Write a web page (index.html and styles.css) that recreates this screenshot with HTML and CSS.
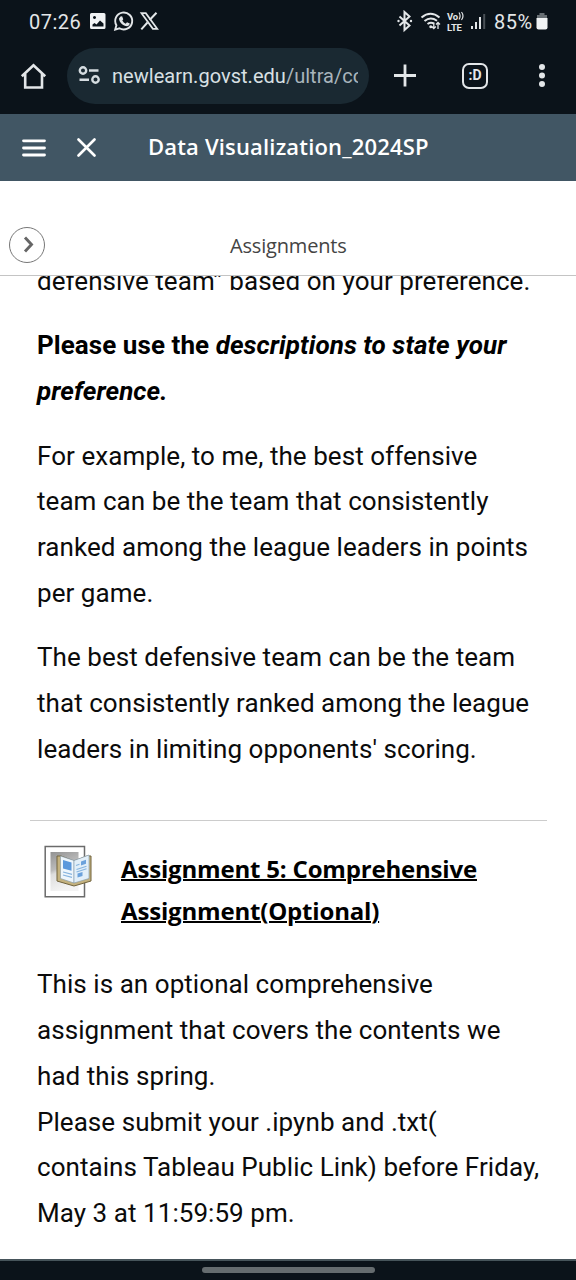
FILE: index.html
```html
<!DOCTYPE html>
<html lang="en">
<head>
<meta charset="utf-8">
<title>Data Visualization_2024SP</title>
<link rel="stylesheet" href="styles.css">
</head>
<body>
<div class="screen">
  <div class="status">
    <span class="clock">07:26</span>
    <svg class="status-left" width="70" height="24" viewBox="0 0 70 24">
      <path fill="#f1f3f4" fill-rule="evenodd" d="M2.500 3h12.500q1.500 0 1.500 1.500v13q0 1.500-1.500 1.500h-12.500q-1.500 0-1.500-1.500v-13q0-1.500 1.500-1.500zM3.500 16.500h11v-3l-3.500-3-3.500 4-2-1.500-2 1.500zM5.500 6a1.500 1.500 0 1 0 .01 0z"/>
      <path fill="none" stroke="#e3e6e8" stroke-width="1.900" d="M26.200 19.600l1.200-4.300a8.500 8.500 0 1 1 3 3z"/>
      <path fill="#e3e6e8" d="M31.500 6.500l1.600-.2 1.200 2.900-1 1.400q1.200 2.200 3.400 3.100l1.300-1.400 2.800 1.300q0 2.300-2.600 2.700c-4 0-8.200-4.300-8.200-7.700z"/>
      <path fill="none" stroke="#e3e6e8" stroke-width="1.800" d="M52.500 3.200h4.300L68.200 18.800h-4.300z"/>
      <path fill="none" stroke="#e3e6e8" stroke-width="2" d="M67.500 2.700l-6.900 7.300M58.500 12.500L52.300 19.300"/>
    </svg>
    <svg class="status-right" width="96" height="24" viewBox="0 0 96 24">
      <g fill="none" stroke="#e3e6e8" stroke-width="2">
        <path d="M3.500 6.500l10 9-5 4.500v-18l5 4.500-10 9"/>
        <path d="M25.500 7.500q9-7.500 18 0M28.500 11q6-5 12.500-.3M31.500 14q3.500-2.400 6.500-.2"/>
        <path d="M37.800 12.500v6M35.800 16.500l2 2 2-2M42 19v-6.500M40 14.500l2-2 2 2" stroke-width="1.300"/>
      </g>
      <circle cx="34.800" cy="16.700" r="1.500" fill="#e3e6e8"/>
      <circle cx="2.500" cy="11" r="1.200" fill="#e3e6e8"/><circle cx="15" cy="11" r="1.200" fill="#e3e6e8"/>
      <text x="51" y="9.500" class="volte">Vo</text>
      <path d="M63 2.500q2.200 3.500 0 7M65.500 2q3 4 0 8" fill="none" stroke="#e3e6e8" stroke-width="1.200"/>
      <text x="51" y="20.500" class="volte">LTE</text>
      <g fill="#e3e6e8">
        <path d="M75 16h2v3h-2zM79 12h2v7h-2zM83 7h2v12h-2z"/>
        <path d="M87.200 4h2v15h-2z" fill="#4a5157"/>
      </g>
    </svg>
    <span class="percent">85%</span>
    <svg class="battery" width="12" height="20" viewBox="0 0 12 20">
      <path d="M3.500 1h5v2h2.500v3h-10v-3h2.500z" fill="#686f74"/>
      <path d="M.5 6h11v9.500q0 2-2 2h-7q-2 0-2-2z" fill="#f1f3f4"/>
    </svg>
  </div>

  <div class="toolbar">
    <svg class="home" width="28" height="28" viewBox="0 0 28 28">
      <path d="M1.800 14.300L13.500 3.200l11.700 11.100M5.200 12v13.500h16.800V12" fill="none" stroke="#e3e6e8" stroke-width="2.600"/>
    </svg>
    <div class="address">
      <svg class="tune" width="24" height="20" viewBox="0 0 24 20">
        <g fill="none" stroke="#d5dce0" stroke-width="2.400">
          <circle cx="5" cy="4.500" r="3.200"/><path d="M11 4.500h9.500M1.500 13.700h9.500"/><circle cx="17.500" cy="13.500" r="3.200"/>
        </g>
      </svg>
      <span class="url">newlearn.govst.edu<span class="path">/ultra/co</span></span>
    </div>
    <svg class="plus" width="24" height="24" viewBox="0 0 24 24"><path d="M1 11.500h22M12 .5v22" stroke="#e3e6e8" stroke-width="2.800"/></svg>
    <span class="tabs">:D</span>
    <svg class="more" width="8" height="26" viewBox="0 0 8 26"><g fill="#e3e6e8"><circle cx="4" cy="4" r="3"/><circle cx="4" cy="12.500" r="3"/><circle cx="4" cy="21" r="3"/></g></svg>
  </div>

  <header class="course">
    <svg class="menu" width="24" height="20" viewBox="0 0 24 20"><path d="M1.500 2.800h21M1.500 10h21M1.500 17h21" stroke="#fff" stroke-width="2.800" stroke-linecap="round"/></svg>
    <svg class="close" width="20" height="20" viewBox="0 0 20 20"><path d="M1.500 1.500l16 16M17.500 1.500l-16 16" stroke="#fff" stroke-width="2.600" stroke-linecap="round"/></svg>
    <span class="course-name">Data Visualization_2024SP</span>
  </header>

  <div class="section">
    <span class="expand"><svg width="12" height="18" viewBox="0 0 12 18"><path d="M2 1.500L8.500 8.500l-6.500 7" fill="none" stroke="#666" stroke-width="2.900"/></svg></span>
    <span class="section-name">Assignments</span>
  </div>

  <main class="content">
    <div class="text first">
      <p>defensive team” based on your preference.</p>
      <p class="bold">Please use the <i>descriptions to state your<br>preference.</i></p>
      <p>For example, to me, the best offensive<br>team can be the team that consistently<br>ranked among the league leaders in points<br>per game.</p>
      <p>The best defensive team can be the team<br>that consistently ranked among the league<br>leaders in limiting opponents' scoring.</p>
    </div>
    <div class="item">
      <svg class="item-icon" width="50" height="54" viewBox="0 0 50 54">
        <defs><linearGradient id="shade" x1="0" y1="0" x2="0.300" y2="1"><stop offset="0" stop-color="#929292"/><stop offset="0.450" stop-color="#bbb"/><stop offset="0.550" stop-color="#ddd"/><stop offset="1" stop-color="#f4f4f4"/></linearGradient></defs>
        <path d="M1.200 1.500h39.300v50.300H1.200z" fill="#fff" stroke="#6b6b6b" stroke-width="1.500"/>
        <path d="M6.500 7h28v39H6.500z" fill="url(#shade)"/>
        <path d="M13 11h4l13 5 13-5h4v25l-17 5-17-5z" fill="#c4b27f" stroke="#71633d" stroke-width="1"/>
        <path d="M16.500 11l13.500 4.500v22.500L16.500 33.500z" fill="#eef6fc" stroke="#8197a8" stroke-width=".6"/>
        <path d="M30 15.500L45 10v23.500l-15 4.500z" fill="#e2eff9" stroke="#8197a8" stroke-width=".6"/>
        <path d="M19 15l8.500 2.400v8.300l-8.500-2.200z" fill="#5b98dc"/>
        <path d="M37 16.500l5-1.800v4l-5 1.800zM33.500 28.500l5-1.500v4L33.500 32.500z" fill="#6ba2dc"/>
        <path d="M19 27l9 2.400M19 30l9 2.400M32 20.500l3.500-1.200M32.500 24.500l10-3.200M32.500 27l10-3.200" stroke="#86b4df" stroke-width="1.200"/>
      </svg>
      <h3 class="item-title">Assignment 5: Comprehensive<br>Assignment(Optional)</h3>
    </div>
    <div class="text">
      <p>This is an optional comprehensive<br>assignment that covers the contents we<br>had this spring.<br>Please submit your .ipynb and .txt(<br>contains Tableau Public Link) before Friday,<br>May 3 at 11:59:59 pm.</p>
    </div>
  </main>
  <div class="navbar"><div class="handle"></div></div>
</div>
</body>
</html>
```
FILE: styles.css
```css
* { box-sizing: border-box; }
body { margin: 0; background: #fff; font-family: Roboto, sans-serif; }
svg { display: block; flex: none; }
.screen { width: 576px; height: 1280px; display: flex; flex-direction: column; overflow: hidden; }
.status { height: 44px; flex: none; background: #0b131a; display: flex; align-items: center; padding-left: 29px; color: #e3e6e8; font-size: 20px; white-space: nowrap; }
.clock { width: 60px; letter-spacing: .5px; }
.status-left { margin-right: 237px; }
.volte { font: bold 9.500px Roboto, sans-serif; fill: #e3e6e8; letter-spacing: -.2px; }
.percent { width: 42px; margin-left: 2px; letter-spacing: .5px; }
.battery { margin-left: 0; }
.toolbar { height: 70px; flex: none; background: #0b131a; display: flex; align-items: center; padding: 0 0 7px 20px; }
.address { width: 302px; height: 56px; margin-left: 19px; border-radius: 28px; background: #1a2932; display: flex; align-items: center; padding: 0 11px; }
.url { width: 246px; margin-left: 10px; overflow: hidden; white-space: nowrap; color: #d9e0e4; font-size: 20px; letter-spacing: .03px; }
.path { color: #a9b5bc; }
.plus { margin-left: 24px; }
.tabs { width: 26px; height: 26px; margin-left: 45px; border: 2.500px solid #e3e6e8; border-radius: 7px; color: #e3e6e8; font-size: 14px; font-weight: bold; line-height: 21px; text-align: center; }
.more { margin-left: 50px; }
.course { height: 67px; flex: none; background: #415664; display: flex; align-items: center; padding-left: 22px; color: #fff; }
.close { margin-left: 31px; }
.course-name { margin: -3px 0 0 51px; font: 600 22px "Open Sans", sans-serif; letter-spacing: .17px; white-space: nowrap; }
.section { height: 95px; flex: none; border-bottom: 1px solid #c4c4c4; display: flex; align-items: center; padding: 33px 0 0 9px; }
.expand { width: 36px; height: 36px; border: 1px solid #777; border-radius: 50%; display: flex; align-items: center; justify-content: center; padding-left: 3px; }
.section-name { margin: 2px 0 0 185px; font: 20px "Open Sans", sans-serif; letter-spacing: -.17px; color: #444; }
.content { flex: 1; overflow: hidden; padding-left: 30px; }
.text { padding-left: 7px; font-size: 26px; line-height: 45.700px; letter-spacing: .055px; color: #0b0b0b; white-space: nowrap; }
.text p { margin: 0 0 18.800px; }
.text .bold { margin: -.5px 0 19.300px; font-weight: bold; letter-spacing: .06px; color: #000; }
.first { margin-top: -17px; }
.item { width: 517px; margin-top: 48px; height: 142px; border-top: 1px solid #ccc; display: flex; padding: 24px 0 0 14px; }
.item-title { margin: 3px 0 0 27px; font: bold 24px/42px "Open Sans", sans-serif; letter-spacing: -.18px; color: #000; text-decoration: underline; text-decoration-thickness: 2px; white-space: nowrap; }
.navbar { height: 21px; flex: none; background: #0b131a; border-top: 2px solid #46545a; display: flex; justify-content: center; padding-top: 6px; }
.handle { width: 173px; height: 6px; border-radius: 3px; background: #656c6f; }
```
